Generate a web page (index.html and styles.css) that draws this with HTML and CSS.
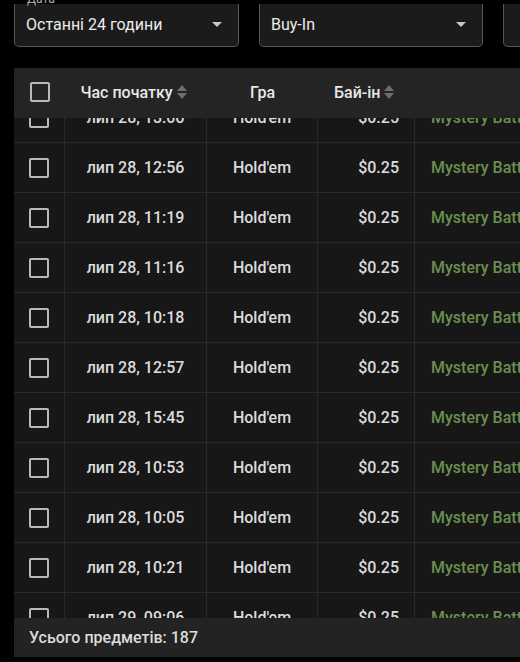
FILE: index.html
```html
<!DOCTYPE html>
<html lang="uk">
<head>
<meta charset="utf-8">
<link rel="stylesheet" href="styles.css">
</head>
<body>
<div class="page">
  <div class="filters">
    <div class="select">
      <span class="label">Дата</span>
      <span class="value">Останні 24 години</span>
      <svg class="arrow" width="10" height="5" viewBox="0 0 10 5"><path d="M0 0 L10 0 L5 5 Z" fill="#c8c8c8"/></svg>
    </div>
    <div class="select">
      <span class="value">Buy-In</span>
      <svg class="arrow" width="10" height="5" viewBox="0 0 10 5"><path d="M0 0 L10 0 L5 5 Z" fill="#c8c8c8"/></svg>
    </div>
    <div class="select select-3"></div>
  </div>

  <div class="table">
    <div class="head">
      <div class="cell c-check"><span class="box"></span></div>
      <div class="cell c-time"><span>Час початку</span><svg class="sort" width="12" height="16" viewBox="0 0 12 16"><path d="M6 1 L11 7 L1 7 Z M6 15 L11 9 L1 9 Z" fill="#6e6e6e"/></svg></div>
      <div class="cell c-game">Гра</div>
      <div class="cell c-buy"><span>Бай-ін</span><svg class="sort" width="12" height="16" viewBox="0 0 12 16"><path d="M6 1 L11 7 L1 7 Z M6 15 L11 9 L1 9 Z" fill="#6e6e6e"/></svg></div>
      <div class="cell c-name"></div>
    </div>
    <div class="body">
      <div class="rows">
        <div class="row"><div class="cell c-check"><span class="box"></span></div><div class="cell c-time">лип 28, 13:06</div><div class="cell c-game">Hold'em</div><div class="cell c-buy">$0.25</div><div class="cell c-name">Mystery Battle</div></div>
        <div class="row"><div class="cell c-check"><span class="box"></span></div><div class="cell c-time">лип 28, 12:56</div><div class="cell c-game">Hold'em</div><div class="cell c-buy">$0.25</div><div class="cell c-name">Mystery Battle</div></div>
        <div class="row"><div class="cell c-check"><span class="box"></span></div><div class="cell c-time">лип 28, 11:19</div><div class="cell c-game">Hold'em</div><div class="cell c-buy">$0.25</div><div class="cell c-name">Mystery Battle</div></div>
        <div class="row"><div class="cell c-check"><span class="box"></span></div><div class="cell c-time">лип 28, 11:16</div><div class="cell c-game">Hold'em</div><div class="cell c-buy">$0.25</div><div class="cell c-name">Mystery Battle</div></div>
        <div class="row"><div class="cell c-check"><span class="box"></span></div><div class="cell c-time">лип 28, 10:18</div><div class="cell c-game">Hold'em</div><div class="cell c-buy">$0.25</div><div class="cell c-name">Mystery Battle</div></div>
        <div class="row"><div class="cell c-check"><span class="box"></span></div><div class="cell c-time">лип 28, 12:57</div><div class="cell c-game">Hold'em</div><div class="cell c-buy">$0.25</div><div class="cell c-name">Mystery Battle</div></div>
        <div class="row"><div class="cell c-check"><span class="box"></span></div><div class="cell c-time">лип 28, 15:45</div><div class="cell c-game">Hold'em</div><div class="cell c-buy">$0.25</div><div class="cell c-name">Mystery Battle</div></div>
        <div class="row"><div class="cell c-check"><span class="box"></span></div><div class="cell c-time">лип 28, 10:53</div><div class="cell c-game">Hold'em</div><div class="cell c-buy">$0.25</div><div class="cell c-name">Mystery Battle</div></div>
        <div class="row"><div class="cell c-check"><span class="box"></span></div><div class="cell c-time">лип 28, 10:05</div><div class="cell c-game">Hold'em</div><div class="cell c-buy">$0.25</div><div class="cell c-name">Mystery Battle</div></div>
        <div class="row"><div class="cell c-check"><span class="box"></span></div><div class="cell c-time">лип 28, 10:21</div><div class="cell c-game">Hold'em</div><div class="cell c-buy">$0.25</div><div class="cell c-name">Mystery Battle</div></div>
        <div class="row"><div class="cell c-check"><span class="box"></span></div><div class="cell c-time">лип 29, 09:06</div><div class="cell c-game">Hold'em</div><div class="cell c-buy">$0.25</div><div class="cell c-name">Mystery Battle</div></div>
      </div>
    </div>
    <div class="footer">Усього предметів: 187</div>
  </div>
</div>
</body>
</html>
```

FILE: styles.css
```css
html, body {
  margin: 0;
  padding: 0;
  background: #000;
  overflow: hidden;
  width: 520px;
  height: 662px;
}
body {
  font-family: Roboto, "Noto Sans", sans-serif;
  color: #e4e4e4;
}
.page {
  padding: 4px 0 0 14px;
}
.filters {
  display: flex;
  gap: 20px;
  height: 43px;
}
.select {
  position: relative;
  flex: 0 0 225px;
  box-sizing: border-box;
  height: 43px;
  background: #1b1b1b;
  border: 1px solid #575757;
  border-top: 0;
  border-radius: 0 0 5px 5px;
  display: flex;
  align-items: center;
  padding: 0 16px 2px 11px;
}
.select + .select { flex-basis: 224px; }
.select-3 { flex-basis: 100px; }
.label {
  position: absolute;
  left: 9px;
  top: -11px;
  font-size: 12px;
  line-height: 13px;
  color: #b0b0b0;
  padding: 0 3px;
}
.value {
  flex: 1;
  font-size: 16px;
  color: #ececec;
}
.arrow { flex: none; }

.table {
  margin-top: 21px;
  width: 620px;
}
.head, .row {
  display: grid;
  grid-template-columns: 51px 142px 111px 97px 219px;
  height: 50px;
}
.head {
  background: #242424;
  font-size: 16px;
  font-weight: 500;
  color: #e8e8e8;
  box-sizing: border-box;
  padding-bottom: 2px;
}
.cell {
  display: flex;
  align-items: center;
  justify-content: center;
  box-sizing: border-box;
  white-space: nowrap;
}
.head .c-time, .head .c-buy { gap: 3px; }
.head .c-buy { justify-content: flex-start; padding-left: 16px; }
.head .c-time { padding-right: 4px; }
.box {
  width: 20px;
  height: 20px;
  box-sizing: border-box;
  border: 2px solid #b9b9b9;
  border-radius: 2px;
}
.row .c-check .box { margin-left: -1px; }
.head .c-check .box { margin-left: 1px; }
.sort { flex: none; }
.body {
  height: 500px;
  overflow: hidden;
  background: #171717;
}
.rows { margin-top: -25px; }
.row {
  background: #171717;
  border-bottom: 1px solid #292929;
  box-sizing: border-box;
  font-size: 16px;
  font-weight: 500;
  color: #dcdcdc;
}
.row .cell { border-right: 1px solid #292929; }
.row .c-buy { justify-content: flex-end; padding-right: 15px; }
.row .c-name {
  justify-content: flex-start;
  padding-left: 16px;
  color: #6b8f4f;
  border-right: 0;
}
.footer {
  height: 39px;
  background: #232323;
  display: flex;
  align-items: center;
  padding-left: 15px;
  font-size: 16px;
  font-weight: 500;
  color: #dcdcdc;
}
```
